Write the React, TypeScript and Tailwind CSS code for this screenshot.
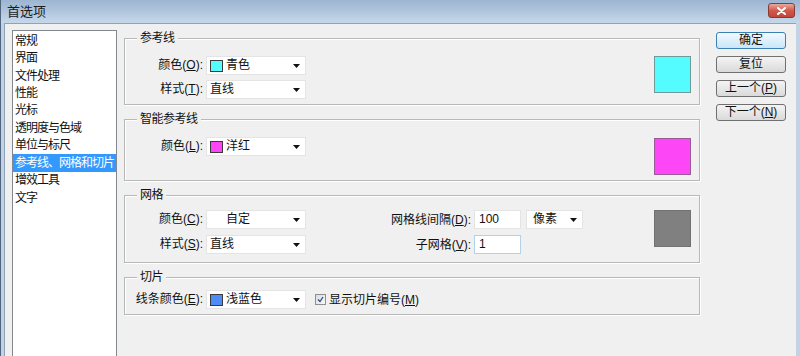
import React from "react";

const CATEGORIES = [
  "常规",
  "界面",
  "文件处理",
  "性能",
  "光标",
  "透明度与色域",
  "单位与标尺",
  "参考线、网格和切片",
  "增效工具",
  "文字",
];

function Key({ pre, k }: { pre: string; k: string }) {
  return (
    <>
      {pre}(<span className="underline">{k}</span>):
    </>
  );
}

function Arrow() {
  return (
    <svg width="7" height="4" viewBox="0 0 7 4" className="shrink-0">
      <path d="M0 0h7L3.5 4z" fill="#111" />
    </svg>
  );
}

function Dropdown({
  text,
  swatch,
  className = "w-[100px] pl-[3px]",
}: {
  text: string;
  swatch?: string;
  className?: string;
}) {
  return (
    <div
      className={`h-[19px] flex items-center bg-white border border-[#e4e4e4] pr-[5px] ${className}`}
    >
      {swatch && (
        <span
          className="w-[13px] h-[12px] mr-[3px] border border-[#3b3b3b] shrink-0"
          style={{ backgroundColor: swatch }}
        />
      )}
      <span className="flex-1 leading-[17px]">{text}</span>
      <Arrow />
    </div>
  );
}

function Swatch({ color, border }: { color: string; border: string }) {
  return (
    <div
      className="ml-auto mr-[8px] w-[37px] h-[37px] border shrink-0"
      style={{ backgroundColor: color, borderColor: border }}
    />
  );
}

function Group({
  title,
  className,
  children,
}: {
  title: string;
  className: string;
  children: React.ReactNode;
}) {
  return (
    <div
      className={`relative border border-[#b8b8b8] shadow-[inset_1px_1px_0_#fff,1px_1px_0_#fff] ${className}`}
    >
      <span className="absolute left-[12px] -top-[9px] px-[3px] bg-[#f0f0f0] leading-[16px] tracking-[-0.5px]">
        {title}
      </span>
      {children}
    </div>
  );
}

function Row({ label, children }: { label: React.ReactNode; children: React.ReactNode }) {
  return (
    <div className="flex items-center h-[19px]">
      <span className="w-[78px] text-right leading-[19px] shrink-0">{label}</span>
      <div className="ml-[3px]">{children}</div>
    </div>
  );
}

function Button({ text, focused }: { text: React.ReactNode; focused?: boolean }) {
  return (
    <div
      className={
        focused
          ? "h-[17px] flex items-center justify-center rounded-[3px] border border-[#3c7fb1] bg-gradient-to-b from-[#f2f9fe] to-[#c9e6f8] leading-[15px]"
          : "h-[17px] flex items-center justify-center rounded-[3px] border border-[#707070] bg-gradient-to-b from-[#f4f4f4] to-[#dadada] leading-[15px]"
      }
    >
      {text}
    </div>
  );
}

export default function App() {
  return (
    <div className="w-[800px] h-[356px] overflow-hidden flex flex-col bg-[#c2d3e6] border-l border-[#51657e] font-['Liberation_Sans','Noto_Sans_CJK_SC',sans-serif] text-[12px] text-[#111]">
      <div className="h-[23px] shrink-0 flex items-center justify-between pl-[6px] pr-[5px] bg-gradient-to-b from-[#9cb5d1] to-[#c6d7ea]">
        <span className="text-[13px] text-[#1c1c1c]">首选项</span>
        <div className="w-[27px] h-[15px] -mt-[2px] flex items-center justify-center rounded-[3px] border border-[#8a3a35] bg-gradient-to-b from-[#e8a99e] via-[#cf5a4d] to-[#c44536]">
          <svg width="9" height="8" viewBox="0 0 9 8">
            <path d="M1 1l7 6M8 1L1 7" stroke="#fff" strokeWidth="2" strokeLinecap="round" />
          </svg>
        </div>
      </div>

      <div className="flex-1 flex ml-[3px] mr-[4px] bg-[#f0f0f0] border-l border-t border-[#8ea2b8]">
        <div className="ml-[7px] mt-[6px] w-[105px] self-stretch -mb-[4px] bg-white border border-[#828790] pt-[1px] tracking-[-1px]">
          {CATEGORIES.map((c) => (
            <div
              key={c}
              className={
                c === "参考线、网格和切片"
                  ? "h-[17.45px] flex items-center pl-[2px] bg-[#3399ff] text-white whitespace-nowrap"
                  : "h-[17.45px] flex items-center pl-[2px] whitespace-nowrap"
              }
            >
              {c}
            </div>
          ))}
        </div>

        <div className="ml-[7px] mt-[14px] w-[576px] flex flex-col">
          <Group title="参考线" className="h-[67px] pt-[17px] flex items-start">
            <div className="flex flex-col gap-[5px]">
              <Row label={<Key pre="颜色" k="O" />}>
                <Dropdown text="青色" swatch="#55fcff" />
              </Row>
              <Row label={<Key pre="样式" k="T" />}>
                <Dropdown text="直线" />
              </Row>
            </div>
            <Swatch color="#55fcff" border="#6f9a9a" />
          </Group>

          <Group title="智能参考线" className="mt-[14px] h-[62px] pt-[17px] flex items-start">
            <Row label={<Key pre="颜色" k="L" />}>
              <Dropdown text="洋红" swatch="#fd46f6" />
            </Row>
            <div className="ml-auto mt-[1px]">
              <Swatch color="#fd46f6" border="#9a5c98" />
            </div>
          </Group>

          <Group title="网格" className="mt-[14px] h-[68px] pt-[14px] flex items-start">
            <div className="flex flex-col gap-[6px]">
              <Row label={<Key pre="颜色" k="C" />}>
                <Dropdown text="自定" className="w-[100px] pl-[19px]" />
              </Row>
              <Row label={<Key pre="样式" k="S" />}>
                <Dropdown text="直线" />
              </Row>
            </div>
            <div className="ml-[65px] flex flex-col gap-[6px]">
              <div className="flex items-center h-[19px]">
                <span className="w-[100px] text-right">
                  <Key pre="网格线间隔" k="D" />
                </span>
                <div className="ml-[3px] w-[47px] h-[19px] bg-white border border-[#e4e4e4] pl-[4px] leading-[17px]">
                  100
                </div>
                <Dropdown text="像素" className="ml-[5px] w-[57px] pl-[6px]" />
              </div>
              <div className="flex items-center h-[19px]">
                <span className="w-[100px] text-right">
                  <Key pre="子网格" k="V" />
                </span>
                <div className="ml-[3px] w-[47px] h-[19px] bg-white border border-[#b5d1ea] pl-[4px] leading-[17px]">
                  1
                </div>
              </div>
            </div>
            <Swatch color="#808080" border="#727272" />
          </Group>

          <Group title="切片" className="mt-[14px] h-[38px] pt-[12px] flex items-start">
            <Row label={<Key pre="线条颜色" k="E" />}>
              <Dropdown text="浅蓝色" swatch="#4f8cf7" />
            </Row>
            <div className="ml-[9px] h-[19px] flex items-center">
              <div className="w-[11px] h-[11px] border border-[#8e8f8f] bg-gradient-to-br from-[#dcdcdc] to-[#f8f8f8] flex items-center justify-center">
                <svg width="7" height="7" viewBox="0 0 7 7">
                  <path d="M1 3.5l2 2L6 1" stroke="#2a4f8a" strokeWidth="1.3" fill="none" />
                </svg>
              </div>
              <span className="ml-[3px]">
                显示切片编号(<span className="underline">M</span>)
              </span>
            </div>
          </Group>
        </div>

        <div className="ml-[16px] mt-[8px] w-[70px] flex flex-col gap-[7px]">
          <Button text="确定" focused />
          <Button text="复位" />
          <Button
            text={
              <>
                上一个(<span className="underline">P</span>)
              </>
            }
          />
          <Button
            text={
              <>
                下一个(<span className="underline">N</span>)
              </>
            }
          />
        </div>
      </div>
    </div>
  );
}
